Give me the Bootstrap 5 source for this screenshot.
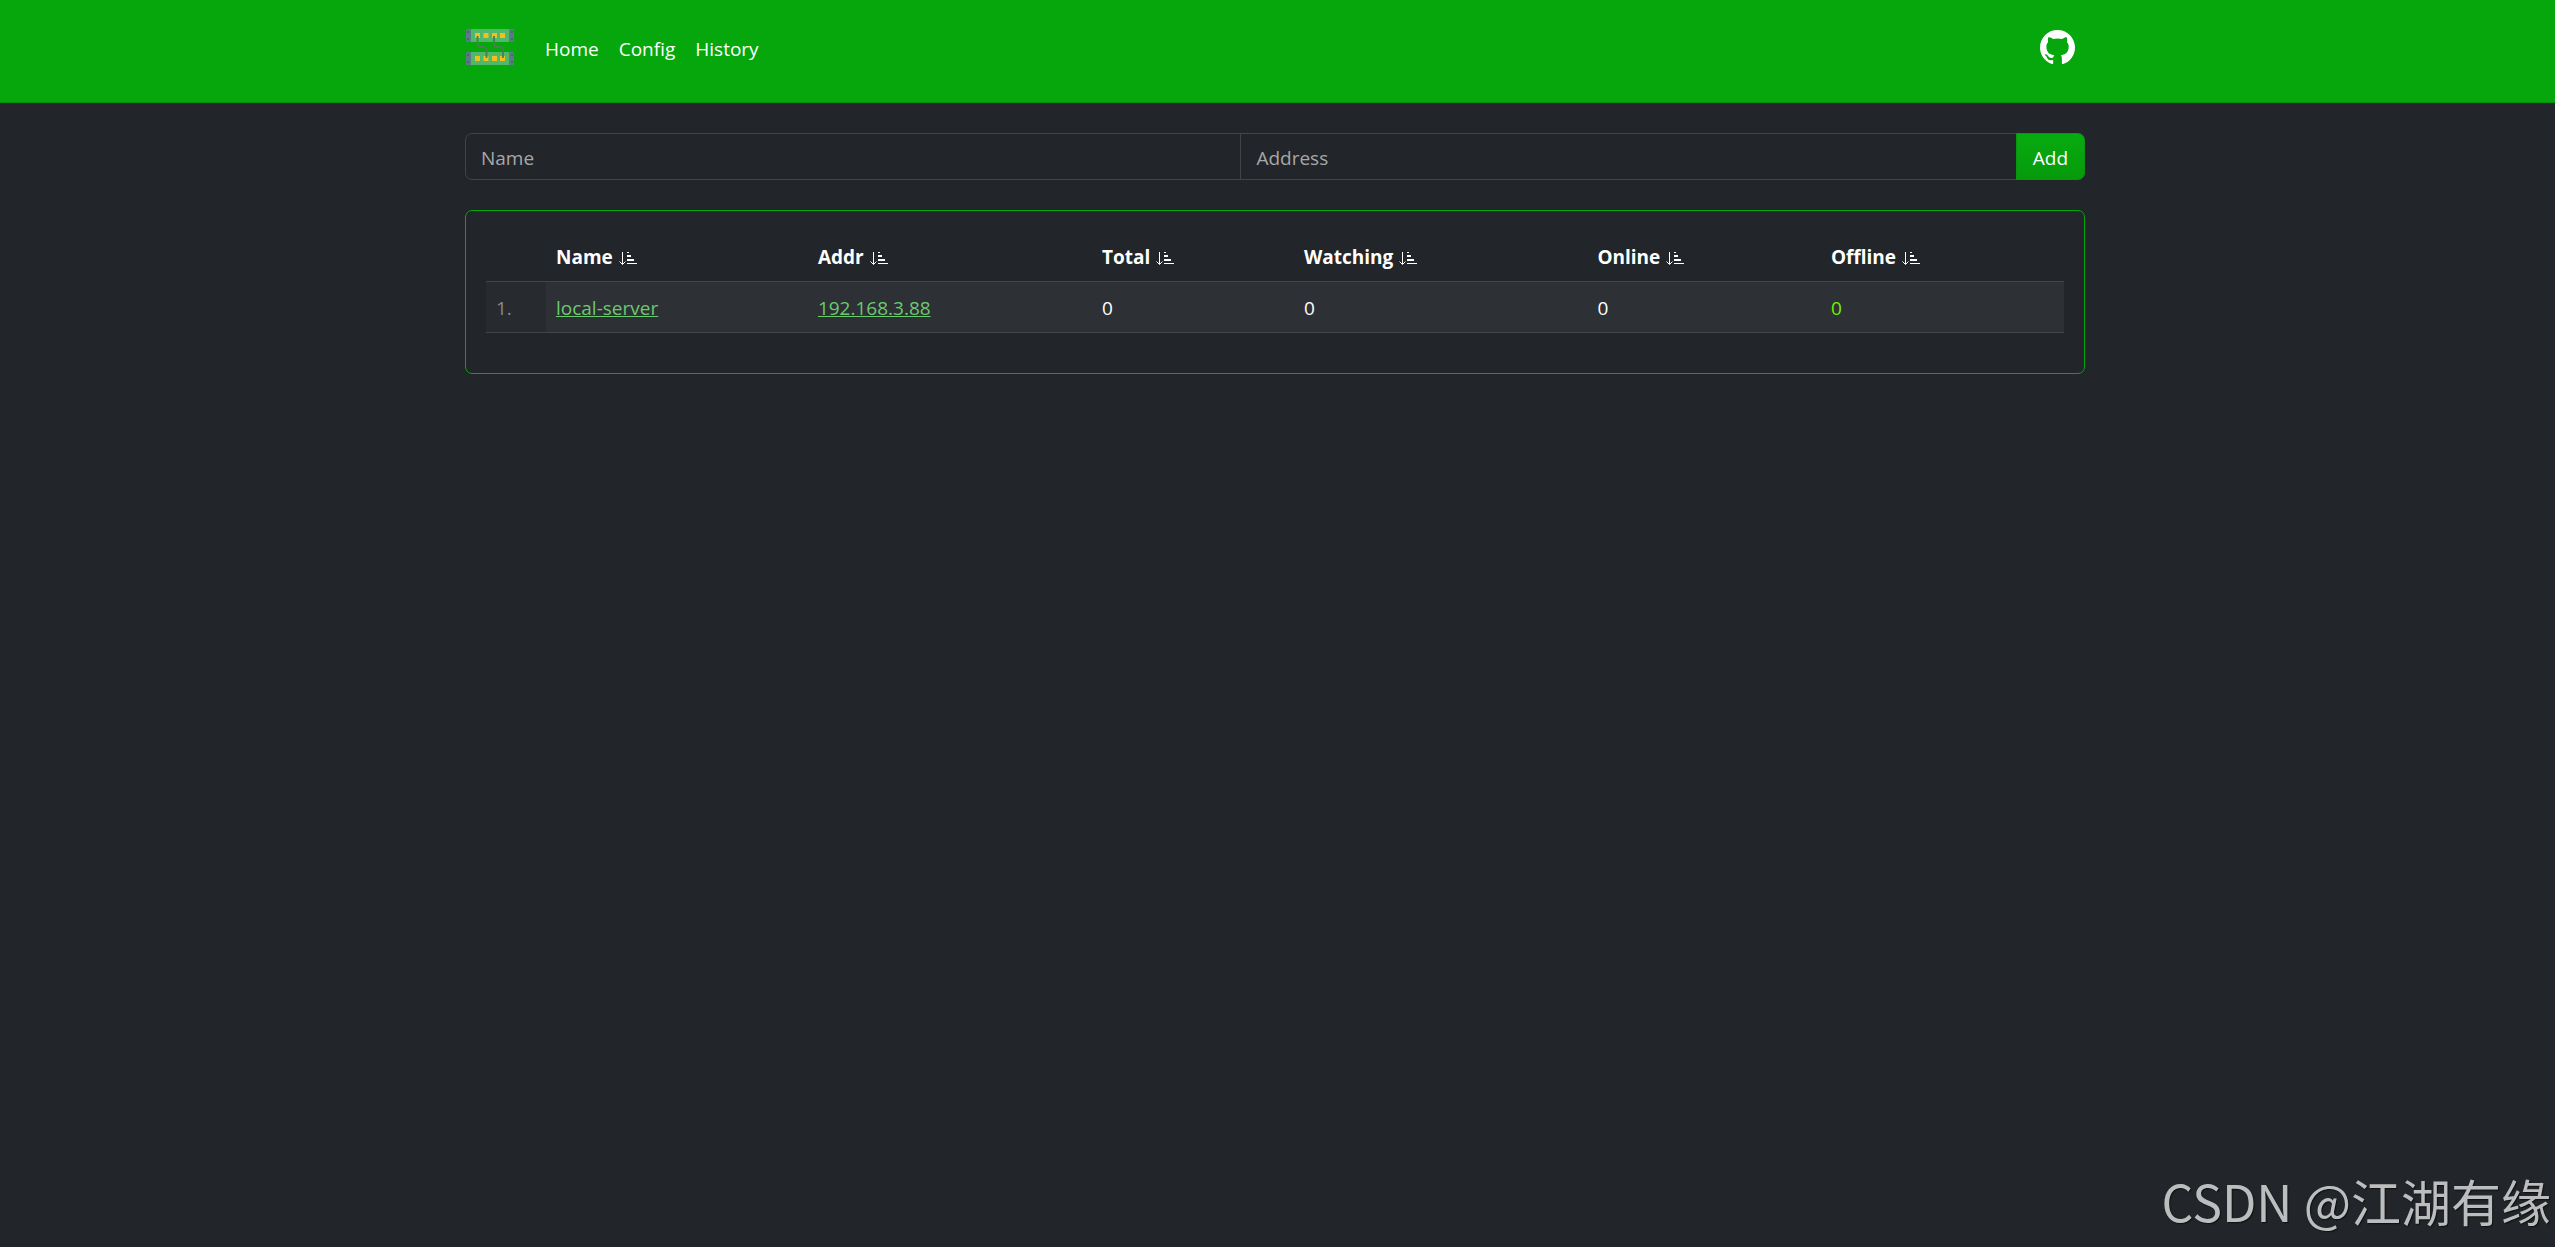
<!DOCTYPE html>
<html lang="en" data-bs-theme="dark">
<head>
<meta charset="utf-8">
<meta name="viewport" content="width=device-width, initial-scale=1">
<title>Home</title>
<link rel="stylesheet" href="https://cdn.jsdelivr.net/npm/bootstrap@5.3.0/dist/css/bootstrap.min.css">
<style>
:root { font-size: 20px; }
body {
  --bs-body-bg: #222529;
  --bs-body-font-family: "Open Sans", "Noto Sans", sans-serif;
  background: #222529;
  color: #fff;
  font-family: "Open Sans", "Noto Sans", sans-serif;
  font-size: 19px;
  line-height: 30px;
  padding-right: 5px;
}
.page-width { max-width: 1650px; padding-left: 15px; padding-right: 15px; }
.top-strip { background: #05a70d; border-bottom: 1px solid #08900d; margin-right: -5px; padding: 20px 5px 30px 0; }
.top-strip .nav-link { color: #fff; padding: 9px 10px 8px; line-height: 30px; }
.brand-mark { margin-right: 20px; line-height: 0; }
.repo-link { margin-right: 10px; line-height: 0; }
.add-row .form-control, .add-row .btn { font-size: 19px; line-height: 30px; padding: 9px 15px 6px; height: 47px; border-radius: 7px; }
.add-row .form-control { background: #222529; border-color: #444; color: #fff; }
.add-row .form-control::placeholder { color: #a7a8a9; opacity: 1; }
.add-row .btn-add { color: #fff; background: linear-gradient(#08ab10, #069a0c); border-color: #08960f; padding-left: 16px; padding-right: 16px; }
.host-card { background: #222529; border-color: #06a70d; border-radius: 7px; }
.host-table { --bs-table-bg: #222529; --bs-table-border-color: #444; color: #fff; border-color: #444; table-layout: fixed; }
.host-table > :not(caption) > * > * { padding: 11px 10px 9px; }
.host-table thead { border-color: #444; }
.host-table th { font-weight: 700; white-space: nowrap; }
.host-table td { background: #2d3034; box-shadow: none; color: #fff; }
.host-table td.row-no { background: #272a2e; color: #88898b; }
.host-table a { color: #6aca6e; }
.host-table td.all-ok { color: #74ee00; }
.w-no { width: 3.8%; } .w-name { width: 16.6%; } .w-addr { width: 18%; } .w-total { width: 12.8%; }
.w-watch { width: 18.6%; } .w-online { width: 14.8%; } .w-offline { width: 15.4%; }
.sort-btn { color: #fff; background: none; border: 0; padding: 0 0 1px 1px; line-height: 0; }
.stamp { position: fixed; right: 4px; bottom: 19px; color: #bcbdbe; font-family: "Noto Sans CJK SC", sans-serif; font-size: 50px; line-height: 56px; text-shadow: 1px 1px 1px #111; white-space: nowrap; }
</style>
<script src="https://cdn.jsdelivr.net/npm/bootstrap@5.3.0/dist/js/bootstrap.bundle.min.js"></script>
</head>
<body>
<svg class="d-none" aria-hidden="true">
  <symbol id="sort" viewBox="0 0 18 14"><path d="M3.500 0v12M.5 9.500l3 3 3-3" fill="none" stroke="currentColor"/><path d="M8 0h2v1H8zM8 3h4v2H8zM8 7h7v2H8zM8 11h10v1H8z" fill="currentColor"/></symbol>
</svg>
<header class="top-strip">
  <nav class="container-fluid page-width mx-auto d-flex align-items-start" aria-label="Main">
    <a class="brand-mark" href="#" aria-label="Home page">
      <svg width="50" height="50" viewBox="0 0 50 50">
        <g id="rack"><rect x="1" y="9" width="48" height="13" rx="1" fill="#5a7a86"/><rect x="6" y="9" width="38" height="13" fill="#4fb86b"/>
        <g fill="#45616d"><circle cx="3" cy="12" r="1"/><circle cx="3" cy="19" r="1"/><circle cx="47" cy="12" r="1"/><circle cx="47" cy="19" r="1"/></g>
        <g fill="#f0c020"><path d="M10 13h5v5h-5zM18.500 13h5v5h-5zM27 13h5v5h-5zM35 13h5v5h-5z"/></g></g>
        <use href="#rack" y="23"/>
        <path d="M12.500 16v8q0 3 3 3h3q3 0 3 3v8M29 16v8q0 3 3 3h3q3 0 3 3v8" fill="none" stroke="#47824e" stroke-width="1.800"/>
      </svg>
    </a>
    <div class="nav flex-grow-1 pt-1">
      <a class="nav-link" href="#">Home</a>
      <a class="nav-link" href="#">Config</a>
      <a class="nav-link" href="#">History</a>
    </div>
    <a class="repo-link text-white pt-2" href="#" aria-label="Source code">
      <svg width="35" height="35" viewBox="0 0 16 16" fill="currentColor"><path d="M8 0C3.580 0 0 3.580 0 8c0 3.540 2.290 6.530 5.470 7.590.4.070.55-.17.55-.38 0-.19-.01-.82-.01-1.490-2.010.37-2.530-.49-2.690-.94-.09-.23-.48-.94-.82-1.130-.28-.15-.68-.52-.01-.53.63-.01 1.080.58 1.230.82.72 1.210 1.870.87 2.330.66.07-.52.28-.87.51-1.070-1.780-.2-3.640-.89-3.640-3.950 0-.87.31-1.590.82-2.150-.08-.2-.36-1.020.08-2.120 0 0 .67-.21 2.200.82.64-.18 1.320-.27 2-.27s1.360.09 2 .27c1.530-1.040 2.200-.82 2.200-.82.44 1.100.16 1.920.08 2.120.51.56.82 1.270.82 2.150 0 3.070-1.870 3.750-3.650 3.950.29.25.54.73.54 1.480 0 1.070-.01 1.930-.01 2.200 0 .21.15.46.55.38A8.010 8.010 0 0 0 16 8c0-4.420-3.580-8-8-8"/></svg>
    </a>
  </nav>
</header>
<main class="container-fluid page-width mx-auto">
  <form class="add-row input-group my-4">
    <input class="form-control" type="text" placeholder="Name" aria-label="Name">
    <input class="form-control" type="text" placeholder="Address" aria-label="Address">
    <button class="btn btn-add" type="button">Add</button>
  </form>
  <section class="card host-card">
    <div class="card-body">
      <table class="table host-table mb-3">
        <thead><tr>
          <th class="w-no"></th>
          <th class="w-name">Name <button class="sort-btn" aria-label="Sort by name"><svg width="18" height="14"><use href="#sort"/></svg></button></th>
          <th class="w-addr">Addr <button class="sort-btn" aria-label="Sort by address"><svg width="18" height="14"><use href="#sort"/></svg></button></th>
          <th class="w-total">Total <button class="sort-btn" aria-label="Sort by total"><svg width="18" height="14"><use href="#sort"/></svg></button></th>
          <th class="w-watch">Watching <button class="sort-btn" aria-label="Sort by watching"><svg width="18" height="14"><use href="#sort"/></svg></button></th>
          <th class="w-online">Online <button class="sort-btn" aria-label="Sort by online"><svg width="18" height="14"><use href="#sort"/></svg></button></th>
          <th class="w-offline">Offline <button class="sort-btn" aria-label="Sort by offline"><svg width="18" height="14"><use href="#sort"/></svg></button></th>
        </tr></thead>
        <tbody><tr>
          <td class="row-no">1.</td>
          <td><a href="#">local-server</a></td>
          <td><a href="#">192.168.3.88</a></td>
          <td>0</td><td>0</td><td>0</td><td class="all-ok">0</td>
        </tr></tbody>
      </table>
    </div>
  </section>
</main>
<div class="stamp">CSDN @江湖有缘</div>
</body>
</html>
